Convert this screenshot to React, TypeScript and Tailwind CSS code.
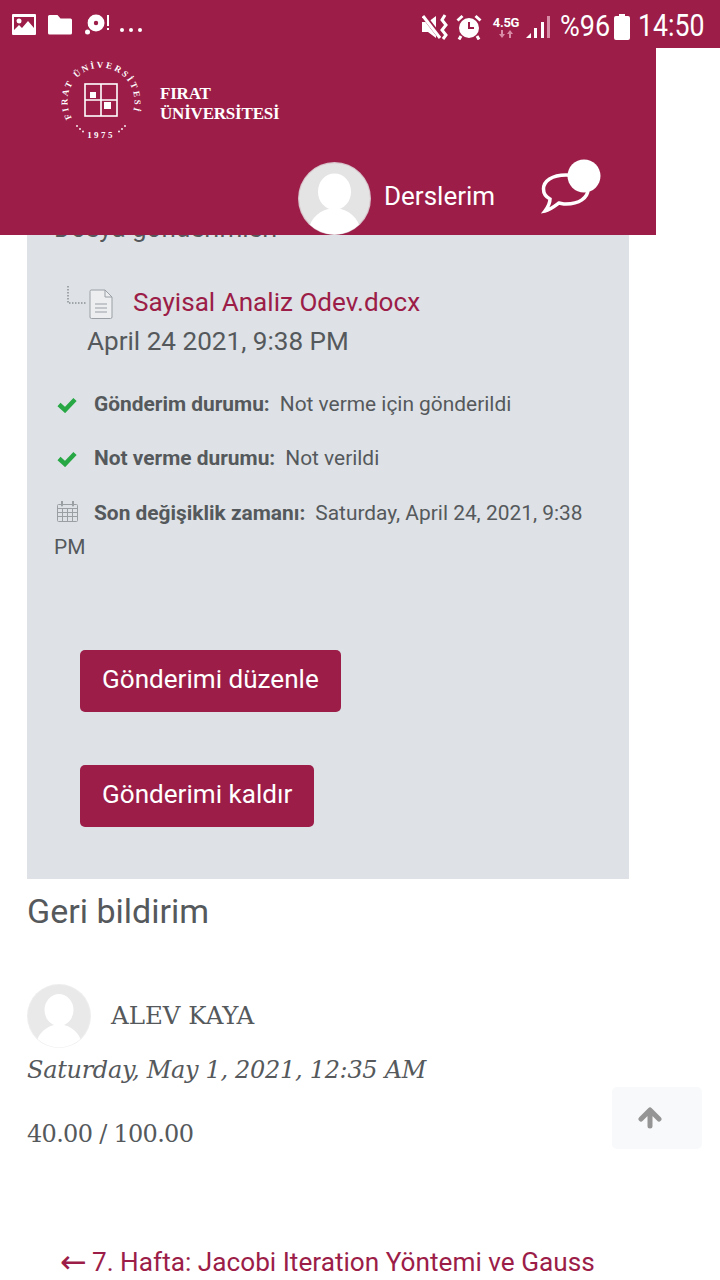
import React from 'react';

const MAROON = '#9b1d48';

const Avatar = ({ className, fill, ring }: { className: string; fill: string; ring: string }) => (
  <svg viewBox="0 0 64 64" className={className}>
    <defs>
      <clipPath id="avatar-clip">
        <circle cx="32" cy="32" r="31.500" />
      </clipPath>
    </defs>
    <circle cx="32" cy="32" r="32" fill={ring} />
    <circle cx="32" cy="32" r="31" fill={fill} />
    <g clipPath="url(#avatar-clip)" fill="#fff">
      <ellipse cx="32" cy="26" rx="14.500" ry="16" />
      <path d="M9 64c0-12 7-20 18-23h10c11 3 18 11 18 23z" />
    </g>
  </svg>
);

const StatusBar = () => (
  <div className="flex h-12 items-start justify-between bg-[#9b1d48] pl-3 pr-[14px] pt-[12px] text-white">
    <div className="flex items-center">
      <svg viewBox="0 0 24 24" className="h-[24px] w-[24px]" fill="#fff">
        <path fillRule="evenodd" d="M1 2h22a1 1 0 0 1 1 1v19a1 1 0 0 1-1 1H1a1 1 0 0 1-1-1V3a1 1 0 0 1 1-1zm1 3v13l5-5 3 3 6-7 6 7V5zM7 6.500a2.500 2.500 0 1 1 0 5 2.500 2.500 0 0 1 0-5z" />
      </svg>
      <svg viewBox="0 0 24 24" className="ml-[12px] h-[24px] w-[24px]" fill="#fff">
        <path d="M1.500 3h8l3 3.500h10a1.500 1.500 0 0 1 1.500 1.500v13a1.500 1.500 0 0 1-1.500 1.500h-21A1.500 1.500 0 0 1 0 21V4.500A1.500 1.500 0 0 1 1.500 3z" />
      </svg>
      <svg viewBox="0 0 26 24" className="ml-[12px] h-[24px] w-[26px]" fill="none">
        <circle cx="12" cy="11" r="8.500" fill="#fff" />
        <path d="M5 17A9.500 9.500 0 0 1 9 2" stroke={MAROON} strokeWidth="1" />
        <circle cx="12" cy="11" r="2.200" fill={MAROON} />
        <circle cx="3.500" cy="20" r="2.500" fill="#fff" />
        <rect x="23" y="3" width="2" height="11" fill="#fff" />
        <rect x="23" y="16" width="2" height="2" fill="#fff" />
      </svg>
      <div className="ml-[10px] mt-[12px] flex gap-[5px]">
        <span className="h-1 w-1 rounded-full bg-white" />
        <span className="h-1 w-1 rounded-full bg-white" />
        <span className="h-1 w-1 rounded-full bg-white" />
      </div>
    </div>
    <div className="flex items-center">
      <svg viewBox="0 0 28 26" className="h-[26px] w-[28px]" fill="#fff">
        <path d="M0 8h6l8-6v22l-8-6H0z" />
        <path d="M2 2l17 22" stroke="#9b1d48" strokeWidth="5" />
        <path d="M1 2l17 22" stroke="#fff" strokeWidth="3" />
        <path d="M23 1l-3 5 4 5-4 5 4 5-3 4" stroke="#fff" strokeWidth="3" fill="none" />
      </svg>
      <svg viewBox="0 0 26 26" className="ml-[6px] h-[26px] w-[26px]" fill="none">
        <circle cx="13" cy="14" r="10" fill="#fff" />
        <path d="M13 8v6h5" stroke={MAROON} strokeWidth="2" />
        <path d="M1.500 6.500L6.500 2M24.500 6.500L19.500 2M5 22l-2 3.500M21 22l2 3.500" stroke="#fff" strokeWidth="3" />
      </svg>
      <div className="ml-[10px] flex w-[28px] flex-col items-center">
        <span className="font-['Roboto',sans-serif] text-[13px] font-bold leading-[14px] tracking-[-0.3px]">4.5G</span>
        <svg viewBox="0 0 16 8" className="h-[8px] w-[16px]" fill="#d98ca6">
          <path d="M3 0h2v4h2L4 8 1 4h2zM11 8h2V4h2l-3-4-3 4h2z" />
        </svg>
      </div>
      <svg viewBox="0 0 26 24" className="ml-[5px] h-[24px] w-[26px]" fill="#fff">
        <path d="M1 23l5-5v5z" />
        <rect x="9" y="13" width="3" height="10" />
        <rect x="16" y="7" width="3" height="16" />
        <rect x="22" y="1" width="3" height="22" fill="#d98ca6" />
      </svg>
      <span className="ml-[9px] w-[48px] origin-left scale-x-[0.9] whitespace-nowrap pb-[2px] font-['Roboto',sans-serif] text-[30px] leading-[28px]">%96</span>
      <svg viewBox="0 0 16 26" className="ml-[6px] h-[26px] w-[16px]" fill="#fff">
        <path d="M5 0h6v2h3a2 2 0 0 1 2 2v20a2 2 0 0 1-2 2H2a2 2 0 0 1-2-2V4a2 2 0 0 1 2-2h3z" />
      </svg>
      <span className="ml-[8px] w-[68px] origin-left scale-x-[0.86] whitespace-nowrap pb-[2px] font-['Roboto',sans-serif] text-[31px] leading-[28px]">14:50</span>
    </div>
  </div>
);

const Seal = () => (
  <svg viewBox="0 0 84 84" className="h-[84px] w-[84px]">
    <defs>
      <path id="seal-top" d="M13 59A33.500 33.500 0 1 1 71 59" />
    </defs>
    <text fill="#fff" fontSize="9" fontWeight="bold" fontFamily="'Liberation Serif', serif" letterSpacing="2.200">
      <textPath href="#seal-top">FIRAT ÜNİVERSİTESİ</textPath>
    </text>
    <text x="42" y="79" textAnchor="middle" fill="#fff" fontSize="9" fontWeight="bold" fontFamily="'Liberation Serif', serif" letterSpacing="2.400">1975</text>
    <g fill="#fff">
      <circle cx="18" cy="67" r="0.900" />
      <circle cx="21" cy="70" r="0.900" />
      <circle cx="24" cy="72.500" r="0.900" />
      <circle cx="60" cy="72.500" r="0.900" />
      <circle cx="63" cy="70" r="0.900" />
      <circle cx="66" cy="67" r="0.900" />
    </g>
    <g fill="none" stroke="#fff" strokeWidth="1.600">
      <rect x="26" y="25" width="32" height="32" />
      <path d="M42 25v16M26 41h32M42 41v16" />
    </g>
    <rect x="31" y="33" width="6" height="6" fill="#fff" />
    <rect x="45" y="43" width="7" height="7" fill="#fff" />
  </svg>
);

const Header = () => (
  <header className="absolute left-0 top-0 z-10 w-full">
    <StatusBar />
    <div className="relative h-[187px] w-[656px] bg-[#9b1d48] text-white">
      <div className="flex items-center pl-[59px] pt-[11px]">
        <Seal />
        <div className="ml-[17px] pt-[5px] font-['Liberation_Serif',serif] text-[17px] font-bold leading-[20px] tracking-[-0.2px]">
          <div>FIRAT</div>
          <div>ÜNİVERSİTESİ</div>
        </div>
      </div>
      <div className="absolute left-[298px] top-[114px] flex items-center">
        <Avatar className="h-[73px] w-[73px]" fill="#e4e4e4" ring="#d8c4cc" />
        <span className="ml-[13px] pb-[6px] font-['Roboto',sans-serif] text-[26px] leading-[30px]">Derslerim</span>
      </div>
      <svg viewBox="0 0 62 56" className="absolute left-[540px] top-[110px] h-[56px] w-[62px]" fill="none">
        <path d="M26 17C12 17 3.500 23 3.500 31c0 5 2.500 8 6.500 10 0 4-2 8-5 12 5-1 10-5 14-8 3 .5 4 1 7 1 13 0 22-6 22-15S39 17 26 17z" stroke="#fff" strokeWidth="3.500" />
        <circle cx="44" cy="18" r="16.500" fill="#fff" />
      </svg>
    </div>
  </header>
);

const CheckIcon = () => (
  <svg viewBox="0 0 20 16" className="h-[16px] w-[20px]" fill="none" stroke="#28a745" strokeWidth="4.500">
    <path d="M2 7.500l6 5.500L18 2.500" />
  </svg>
);

const CalendarIcon = () => (
  <svg viewBox="0 0 21 21" className="h-[21px] w-[21px]" fill="none" stroke="#9a9fa4" strokeWidth="1">
    <rect x="0.500" y="3.500" width="20" height="17" rx="1" />
    <path d="M0.500 7.500h20M0.500 11.500h20M0.500 15.500h20M5.500 7.500v13M10.500 7.500v13M15.500 7.500v13" />
    <path d="M5 0.500v4M16 0.500v4" strokeWidth="2" strokeLinecap="round" />
  </svg>
);

const StatusRow = ({ icon, label, value, className }: { icon: React.ReactNode; label: string; value: string; className?: string }) => (
  <div className={`text-[20.9px] leading-[34px] ${className ?? ''}`}>
    <span className="inline-flex w-[40px] pl-[3px] align-[-2px]">{icon}</span>
    <span className="mr-[10px] font-bold">{label}</span>
    {value}
  </div>
);

const ActionButton = ({ children }: { children: string }) => (
  <button className="block h-[62px] rounded-[5px] bg-[#9b1d48] px-[22px] pb-[3px] text-[26.1px] text-white">
    {children}
  </button>
);

export default function App() {
  return (
    <div className="relative h-[1280px] w-[720px] overflow-hidden bg-white font-['Roboto',sans-serif] text-[#55595c]">
      <Header />

      <main className="pl-[27px] pt-[210px]">
        <section className="h-[669px] w-[602px] bg-[#dee2e6] pl-[27px] pr-[27px] pt-[3px]">
          <div className="text-[26px] leading-[30px]">Dosya gönderimleri</div>

          <div className="mt-[42px] flex items-center pl-[12px]">
            <svg viewBox="0 0 48 34" className="h-[34px] w-[48px]" fill="none">
              <path d="M2 1v17h19" stroke="#8a9096" strokeWidth="1.500" strokeDasharray="1.500 1.500" />
              <path d="M25 5h14l7 7v20a1.500 1.500 0 0 1-1.500 1.500h-19A1.500 1.500 0 0 1 24 32V6.500A1.500 1.500 0 0 1 25 5z" stroke="#9aa0a6" fill="#eceef0" />
              <path d="M39 5v7h7M29 19h12M29 23h12M29 27h12" stroke="#9aa0a6" />
            </svg>
            <a className="ml-[19px] text-[26.1px] leading-[30px] text-[#9b1d48]">Sayisal Analiz Odev.docx</a>
          </div>
          <div className="ml-[33px] mt-[7px] text-[26.1px] leading-[30px]">April 24 2021, 9:38 PM</div>

          <div className="mt-[31px] flex flex-col gap-[20px]">
            <StatusRow
              icon={<CheckIcon />}
              label="Gönderim durumu:"
              value="Not verme için gönderildi"
            />
            <StatusRow
              icon={<CheckIcon />}
              label="Not verme durumu:"
              value="Not verildi"
            />
            <StatusRow
              className="mt-[1px]"
              icon={<CalendarIcon />}
              label="Son değişiklik zamanı:"
              value="Saturday, April 24, 2021, 9:38 PM"
            />
          </div>

          <div className="ml-[26px] mt-[86px] flex flex-col items-start gap-[53px]">
            <ActionButton>Gönderimi düzenle</ActionButton>
            <ActionButton>Gönderimi kaldır</ActionButton>
          </div>
        </section>

        <h3 className="mt-[12px] text-[34px] leading-[40px]">Geri bildirim</h3>

        <div className="mt-[53px] flex items-center">
          <Avatar className="h-[64px] w-[64px]" fill="#e9e9e9" ring="#eeeeee" />
          <span className="ml-[20px] font-['DejaVu_Serif',serif] text-[24.500px]">ALEV KAYA</span>
        </div>
        <div className="mt-[4px] font-['DejaVu_Serif',serif] text-[24px] italic leading-[36px] tracking-[-0.3px]">Saturday, May 1, 2021, 12:35 AM</div>
        <div className="mt-[28px] font-['DejaVu_Serif',serif] text-[24px] leading-[36px] tracking-[-0.7px]">40.00 / 100.00</div>

        <a className="ml-[33px] mt-[95px] flex items-center whitespace-nowrap text-[26.2px] leading-[30px] text-[#9b1d48]">
          <span className="w-[32px] font-['DejaVu_Sans',sans-serif] text-[32px]">←</span>
          7. Hafta: Jacobi Iteration Yöntemi ve Gauss
        </a>
      </main>

      <button className="absolute left-[612px] top-[1087px] flex h-[62px] w-[90px] items-center rounded-[5px] bg-[#f8f9fa] pl-[26px]">
        <svg viewBox="0 0 24 22" className="h-[22px] w-[24px]" fill="none" stroke="#959595" strokeWidth="5" strokeLinecap="round" strokeLinejoin="round">
          <path d="M12 19V4M3 12l9-9 9 9" />
        </svg>
      </button>
    </div>
  );
}
